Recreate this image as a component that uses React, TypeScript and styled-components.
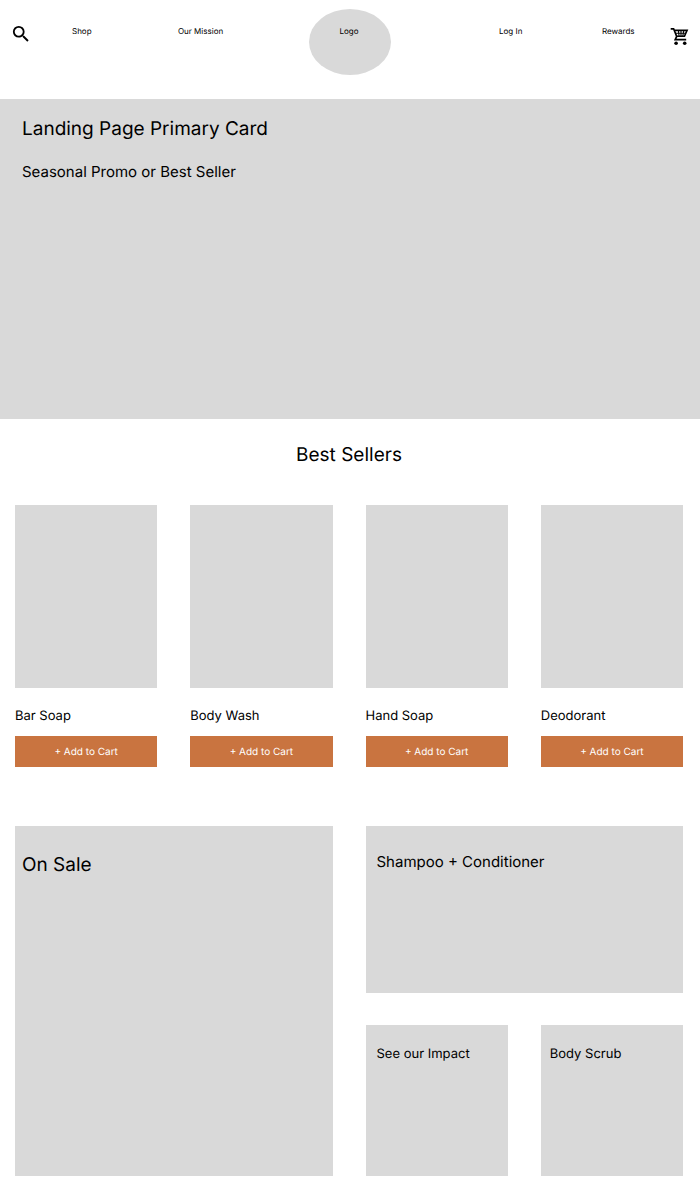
import React from "react";
import styled, { createGlobalStyle } from "styled-components";
import { MdSearch } from "react-icons/md";

const GlobalStyle = createGlobalStyle`
  *, *::before, *::after { box-sizing: border-box; }
  body {
    margin: 0;
    background: #fff;
    color: #000;
    font-family: Inter, "Liberation Sans", sans-serif;
    text-rendering: geometricPrecision;
  }
  h1, h2, h3, p { margin: 0; font-weight: 400; }
`;

const Header = styled.header`
  display: grid;
  grid-template-columns: 60fr 106fr 131fr 82px 108fr 103fr 69fr 18px;
  align-items: start;
  padding: 9px 11px 24px 12px;
`;

const IconButton = styled.button`
  display: block;
  justify-self: start;
  width: 18px;
  height: 18px;
  margin-top: 16px;
  padding: 0;
  border: 0;
  background: none;
  color: #000;
  cursor: pointer;

  svg {
    display: block;
    width: 100%;
    height: 100%;
    overflow: visible;
  }
`;

const SearchButton = styled(IconButton)`
  svg {
    transform: scale(1.2);
  }
`;

const CartButton = styled(IconButton)`
  margin-top: 19px;
`;

const NavLink = styled.a<{ $column?: number }>`
  grid-column: ${({ $column }) => $column ?? "auto"};
  justify-self: start;
  margin-top: 16px;
  color: #000;
  font-size: 8px;
  line-height: 12px;
  text-decoration: none;
  white-space: nowrap;
`;

const Logo = styled.a`
  height: 66px;
  padding: 16px 2px 0 0;
  border-radius: 50%;
  background: #d9d9d9;
  color: #000;
  font-size: 8px;
  line-height: 12px;
  text-align: center;
  text-decoration: none;
`;

const Hero = styled.section`
  display: flex;
  flex-direction: column;
  gap: 20px;
  min-height: 320px;
  padding: 17px 22px;
  background: #d9d9d9;
`;

const Title = styled.h2`
  font-size: 19px;
  line-height: 26px;
`;

const Subtitle = styled.p`
  font-size: 15px;
  line-height: 20px;
`;

const CardTitle = styled.h3`
  font-size: 13px;
  line-height: 20px;
`;

const SectionTitle = styled(Title)`
  padding: 23px 17px 37px 15px;
  text-align: center;
`;

const Grid = styled.section`
  display: grid;
  grid-template-columns: repeat(4, minmax(0, 1fr));
  column-gap: 33px;
  padding: 0 17px 0 15px;
`;

const Product = styled.article`
  display: flex;
  flex-direction: column;
`;

const ProductImage = styled.div`
  height: 183px;
  margin-bottom: 18px;
  background: #d9d9d9;
`;

const AddButton = styled.button`
  height: 31px;
  margin-top: 10px;
  padding: 0;
  border: 0;
  background: #c97440;
  color: #fff;
  font-family: inherit;
  font-size: 10px;
  line-height: 16px;
  text-rendering: inherit;
  cursor: pointer;
`;

const PromoGrid = styled(Grid)`
  grid-template-rows: 167px 151px;
  row-gap: 32px;
  padding-top: 59px;
  padding-bottom: 28px;
`;

const Promo = styled.article<{ $columns?: number; $rows?: number; $inset?: number }>`
  grid-column: span ${({ $columns = 1 }) => $columns};
  grid-row: span ${({ $rows = 1 }) => $rows};
  padding: ${({ $columns = 1 }) => ($columns > 1 ? 26 : 19)}px
    ${({ $inset = 11 }) => $inset}px;
  background: #d9d9d9;
`;

const CartIcon = () => (
  <svg viewBox="0 0 18 18" fill="none" stroke="currentColor" aria-hidden="true">
    <path d="M-.3 .8H2.6L5.7 8.4 4.2 11.7H15.2" strokeWidth="1.7" />
    <path d="M3.3 2.4H16.1L13.5 8.2H5.8" strokeWidth="1.6" />
    <path d="M4.6 5.3H14.8M7.4 2.4 8.1 8.2M10 2.4V8.2M12.8 2.4 11.8 8.2" strokeWidth="1.1" />
    <circle cx="5.1" cy="15.2" r="1.8" fill="currentColor" stroke="none" />
    <circle cx="13.7" cy="15.2" r="1.8" fill="currentColor" stroke="none" />
  </svg>
);

const products = ["Bar Soap", "Body Wash", "Hand Soap", "Deodorant"];

export default function App() {
  return (
    <>
      <GlobalStyle />
      <Header>
        <SearchButton type="button" aria-label="Search">
          <MdSearch />
        </SearchButton>
        <NavLink href="#shop">Shop</NavLink>
        <NavLink href="#mission">Our Mission</NavLink>
        <Logo href="#home">Logo</Logo>
        <NavLink href="#login" $column={6}>Log In</NavLink>
        <NavLink href="#rewards">Rewards</NavLink>
        <CartButton type="button" aria-label="Cart">
          <CartIcon />
        </CartButton>
      </Header>
      <main>
        <Hero>
          <Title as="h1">Landing Page Primary Card</Title>
          <Subtitle>Seasonal Promo or Best Seller</Subtitle>
        </Hero>
        <SectionTitle>Best Sellers</SectionTitle>
        <Grid>
          {products.map((name) => (
            <Product key={name}>
              <ProductImage />
              <CardTitle>{name}</CardTitle>
              <AddButton type="button">+ Add to Cart</AddButton>
            </Product>
          ))}
        </Grid>
        <PromoGrid>
          <Promo $columns={2} $rows={2} $inset={7}>
            <Title>On Sale</Title>
          </Promo>
          <Promo $columns={2}>
            <Subtitle>Shampoo + Conditioner</Subtitle>
          </Promo>
          <Promo>
            <CardTitle>See our Impact</CardTitle>
          </Promo>
          <Promo $inset={9}>
            <CardTitle>Body Scrub</CardTitle>
          </Promo>
        </PromoGrid>
      </main>
    </>
  );
}
